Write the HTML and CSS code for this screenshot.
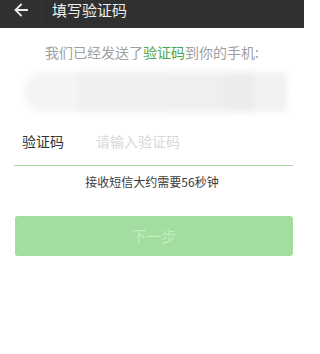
FILE: index.html
```html
<!DOCTYPE html>
<html lang="zh-CN">
<head>
<meta charset="utf-8">
<title>填写验证码</title>
<link rel="stylesheet" href="styles.css">
</head>
<body>
<div class="page">
  <header class="topbar">
    <span class="back">
      <svg width="14" height="14" viewBox="0 0 14 14"><path d="M13 7H2M7 1.5L1.5 7L7 12.5" fill="none" stroke="#eeeeee" stroke-width="1.8" stroke-linecap="square"/></svg>
    </span>
    <span class="divider"></span>
    <span class="title">填写验证码</span>
  </header>
  <p class="intro">我们已经发送了<span class="hl">验证码</span>到你的手机:</p>
  <div class="masked">
    <span class="seg s1"></span>
    <span class="seg s2"></span>
    <span class="seg s3"></span>
    <span class="seg s4"></span>
    <span class="seg s5"></span>
  </div>
  <div class="field">
    <span class="label">验证码</span>
    <span class="placeholder">请输入验证码</span>
  </div>
  <p class="tip">接收短信大约需要56秒钟</p>
  <div class="btn">下一步</div>
</div>
</body>
</html>
```
FILE: styles.css
```css
html, body {
  margin: 0;
  padding: 0;
  background: #ffffff;
}
body {
  font-family: "Noto Sans CJK SC", "Noto Sans", sans-serif;
}
.page {
  width: 304px;
  height: 354px;
  overflow: hidden;
  display: flex;
  flex-direction: column;
}
.topbar {
  height: 28px;
  background: #303030;
  display: flex;
  align-items: flex-start;
  flex-shrink: 0;
}
.back {
  margin-left: 14px;
  margin-top: 3px;
  width: 14px;
  height: 14px;
  display: flex;
}
.divider {
  width: 1px;
  height: 28px;
  margin-left: 13px;
  background: #353535;
}
.title {
  margin-left: 10px;
  font-size: 15px;
  line-height: 20px;
  color: #eeeeee;
}
.intro {
  margin: 14px 0 0;
  text-align: center;
  font-size: 14px;
  line-height: 20px;
  color: #a0a0a0;
}
.hl {
  color: #4aa84c;
}
.masked {
  margin: 10px 17px 0 24px;
  height: 40px;
  display: flex;
  filter: blur(3px);
  border-radius: 20px 4px 4px 20px;
  overflow: hidden;
}
.seg {
  height: 100%;
}
.s1 { width: 55px; background: #f3f4f6; }
.s2 { width: 90px; background: #f0f0f0; }
.s3 { width: 55px; background: #efefef; }
.s4 { width: 30px; background: #ebedeb; }
.s5 { flex: 1; background: #f2f2f2; }
.field {
  margin: 19px 11px 0 14px;
  padding: 0 0 14px 8px;
  border-bottom: 1px solid #a8d8a0;
  display: flex;
  font-size: 14px;
  line-height: 20px;
}
.label {
  width: 74px;
  color: #333333;
}
.placeholder {
  color: #d8d8d8;
}
.tip {
  margin: 8px 0 0;
  text-align: center;
  font-size: 12px;
  line-height: 16px;
  color: #3c3c3c;
}
.btn {
  margin: 26px 11px 0 15px;
  height: 40px;
  border-radius: 3px;
  background: #a2de9f;
  color: #c3edc1;
  font-size: 15px;
  line-height: 40px;
  text-align: center;
}
```
